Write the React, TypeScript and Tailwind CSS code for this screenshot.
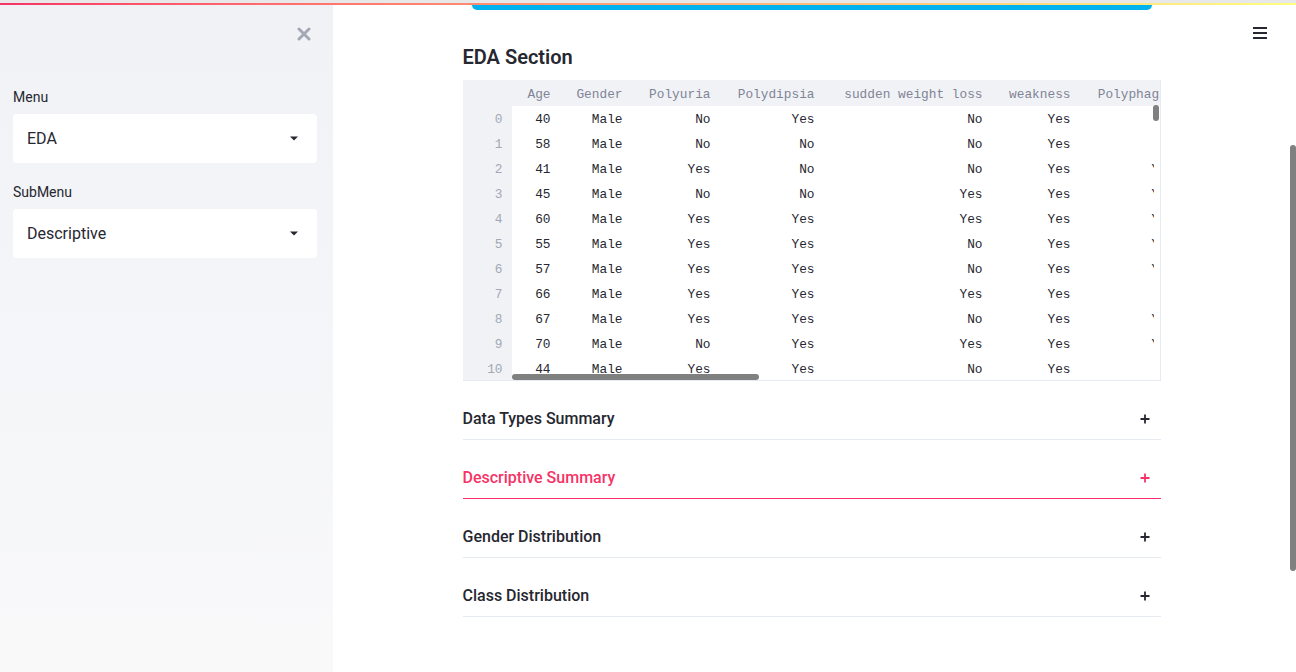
import React from 'react';

const sans = { fontFamily: 'Roboto, "Noto Sans", sans-serif' };
const mono = { fontFamily: '"Liberation Mono", "DejaVu Sans Mono", monospace' };

const columns = [
  { name: 'Age', width: 'w-[47px]' },
  { name: 'Gender', width: 'w-[72px]' },
  { name: 'Polyuria', width: 'w-[88px]' },
  { name: 'Polydipsia', width: 'w-[104px]' },
  { name: 'sudden weight loss', width: 'w-[168px]' },
  { name: 'weakness', width: 'w-[88px]' },
  { name: 'Polyphagia', width: 'w-[104px]' },
];

const rows = [
  ['40', 'Male', 'No', 'Yes', 'No', 'Yes', 'No'],
  ['58', 'Male', 'No', 'No', 'No', 'Yes', 'No'],
  ['41', 'Male', 'Yes', 'No', 'No', 'Yes', 'Yes'],
  ['45', 'Male', 'No', 'No', 'Yes', 'Yes', 'Yes'],
  ['60', 'Male', 'Yes', 'Yes', 'Yes', 'Yes', 'Yes'],
  ['55', 'Male', 'Yes', 'Yes', 'No', 'Yes', 'Yes'],
  ['57', 'Male', 'Yes', 'Yes', 'No', 'Yes', 'Yes'],
  ['66', 'Male', 'Yes', 'Yes', 'Yes', 'Yes', 'No'],
  ['67', 'Male', 'Yes', 'Yes', 'No', 'Yes', 'Yes'],
  ['70', 'Male', 'No', 'Yes', 'Yes', 'Yes', 'Yes'],
  ['44', 'Male', 'Yes', 'Yes', 'No', 'Yes', 'No'],
];

const sections = [
  { title: 'Data Types Summary', active: false },
  { title: 'Descriptive Summary', active: true },
  { title: 'Gender Distribution', active: false },
  { title: 'Class Distribution', active: false },
];

const Caret = () => (
  <svg width="10" height="5" viewBox="0 0 10 5" className="text-[#262730]">
    <path d="M1 0.5h8L5 4.5z" fill="currentColor" />
  </svg>
);

const SelectBox = ({ label, value }: { label: string; value: string }) => (
  <div>
    <div className="text-[14px] leading-5 text-[#262730]">{label}</div>
    <div className="mt-[7px] h-[49px] rounded-[4px] bg-white flex items-center justify-between pl-[14px] pr-[18px]">
      <span className="text-[16px] text-[#262730]">{value}</span>
      <Caret />
    </div>
  </div>
);

const Plus = ({ active }: { active: boolean }) => (
  <svg width="10" height="10" viewBox="0 0 10 10" className={active ? 'text-[#f63366]' : 'text-[#262730]'}>
    <path d="M5 0.5v9M0.5 5h9" stroke="currentColor" strokeWidth="1.8" />
  </svg>
);

const DataTable = () => (
  <div className="relative w-[698px] h-[301px] overflow-hidden border-r border-b border-[#e6eaf1]">
    <table className="table-fixed w-[720px] border-collapse text-[12.8px]" style={mono}>
      <colgroup>
        <col className="w-[49px]" />
        {columns.map((c) => (
          <col key={c.name} className={c.width} />
        ))}
      </colgroup>
      <thead>
        <tr className="h-[26px] bg-[#f0f2f6] text-[#808495]">
          <th className="p-0" />
          {columns.map((c) => (
            <th key={c.name} className="p-0 pt-[3px] pr-2 text-right font-normal whitespace-nowrap">
              {c.name}
            </th>
          ))}
        </tr>
      </thead>
      <tbody>
        {rows.map((r, i) => (
          <tr key={i} className="h-[25px]">
            <td className="bg-[#f0f2f6] text-[#a3a8b4] text-right pr-[9px] p-0 pt-[2px]">{i}</td>
            {r.map((v, j) => (
              <td key={j} className="p-0 pt-[2px] pr-2 text-right text-[#262730] whitespace-nowrap">
                {v}
              </td>
            ))}
          </tr>
        ))}
      </tbody>
    </table>
    {/* vertical scrollbar track and thumb */}
    <div className="absolute right-0 top-[26px] bottom-0 w-[6px] bg-white" />
    <div className="absolute right-[1px] top-[25px] w-[6px] h-[16px] rounded-full bg-[#808080]" />
    {/* horizontal scrollbar thumb */}
    <div className="absolute left-[49px] bottom-[0px] w-[247px] h-[6px] rounded-full bg-[#808080]" />
  </div>
);

export default function App() {
  return (
    <div className="relative w-[1296px] h-[672px] overflow-hidden bg-white flex flex-col" style={sans}>
      <div className="h-[3px] bg-[#e8e8e8]" />
      <div className="h-[2px] bg-linear-to-r from-[#f63366] to-[#fffd80]" />
      <div className="flex flex-1 min-h-0">
        {/* Sidebar */}
        <aside className="w-[333px] shrink-0 bg-linear-to-b from-[#f0f2f6] to-[#f9f9fa] pl-[13px] pr-[16px]">
          <div className="flex justify-end pt-[22px] pr-[6px]">
            <svg width="14" height="14" viewBox="0 0 14 14" className="text-[#a3a8b4]">
              <path d="M2 2l10 10M12 2L2 12" stroke="currentColor" strokeWidth="3" strokeLinecap="round" />
            </svg>
          </div>
          <div className="mt-[46px] flex flex-col gap-[19px]">
            <SelectBox label="Menu" value="EDA" />
            <SelectBox label="SubMenu" value="Descriptive" />
          </div>
        </aside>

        {/* Main */}
        <main className="relative flex-1 pr-[6px]">
          <div className="w-[698px] mx-auto">
            <div className="mx-[9px] h-[5px] rounded-b-[6px] bg-[#00b2ee]" />
            <h3 className="mt-[33px] h-[28px] leading-[28px] text-[20px] font-semibold text-[#262730]">EDA Section</h3>
            <div className="mt-[9px]">
              <DataTable />
            </div>
            <div className="flex flex-col">
              {sections.map((s) => (
                <div key={s.title} className="mt-[16px]">
                  <div
                    className={
                      s.active
                        ? 'h-[42px] pt-[2px] flex items-center justify-between pr-[11px] text-[#f63366]'
                        : 'h-[42px] pt-[2px] flex items-center justify-between pr-[11px] text-[#262730]'
                    }
                  >
                    <span className="text-[16px] font-medium">{s.title}</span>
                    <Plus active={s.active} />
                  </div>
                  <div className={s.active ? 'h-[1px] bg-[#ff2b6a]' : 'h-[1px] bg-[#e6eaf1]'} />
                </div>
              ))}
            </div>
          </div>

          {/* hamburger */}
          <div className="absolute top-[22px] right-[29px] flex flex-col gap-[3px]">
            <span className="block w-[14px] h-[2px] bg-[#262730]" />
            <span className="block w-[14px] h-[2px] bg-[#262730]" />
            <span className="block w-[14px] h-[2px] bg-[#262730]" />
          </div>

          {/* page scrollbar thumb */}
          <div className="absolute right-0 top-[140px] w-[6px] h-[426px] rounded-full bg-[#808080]" />
        </main>
      </div>
    </div>
  );
}
